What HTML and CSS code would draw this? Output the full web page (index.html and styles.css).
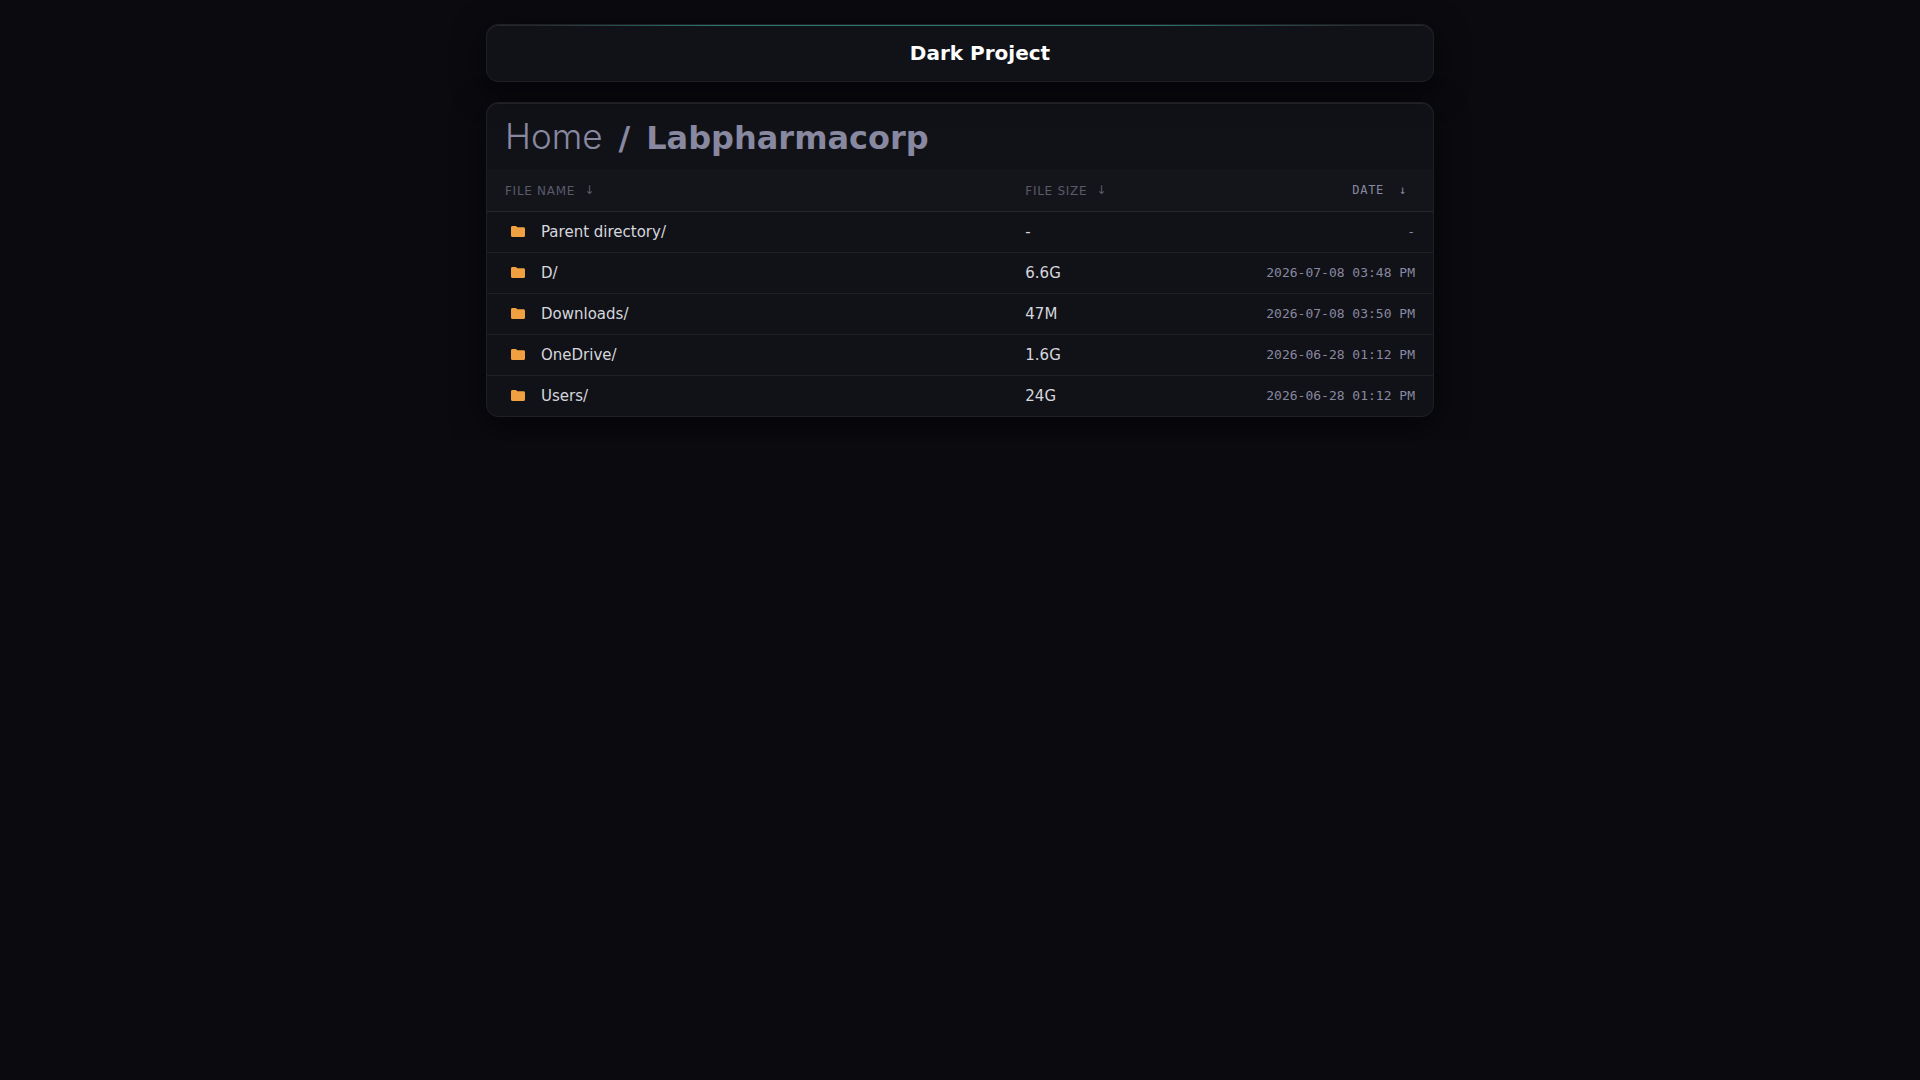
FILE: index.html
```
<!DOCTYPE html>
<html lang="en">
<head>
<meta charset="utf-8">
<meta name="viewport" content="width=device-width, initial-scale=1">
<title>Dark Project</title>
<link rel="stylesheet" href="styles.css">
</head>
<body>
<svg class="sprite" aria-hidden="true">
  <symbol id="folder" viewBox="0 0 14 11">
    <path d="M1.500 0H4.600C5.200 0 5.500.2 5.800.7L6.300 1.300H12.500C13.400 1.300 14 1.900 14 2.800V9.500C14 10.400 13.400 11 12.500 11H1.500C.6 11 0 10.400 0 9.500V1.500C0 .6.6 0 1.500 0z"/>
  </symbol>
</svg>
<div class="page">
  <header class="card banner">
    <h1 class="banner-title">Dark Project</h1>
  </header>
  <main class="card listing">
    <nav class="path" aria-label="Breadcrumb">
      <a class="path-home" href="#">Home</a>
      <span>/</span>
      <span>Labpharmacorp</span>
    </nav>
    <table class="files">
      <thead>
        <tr>
          <th class="name" scope="col"><a href="#">File Name</a><a class="sort" href="#" aria-label="Sort by name">↓</a></th>
          <th class="size" scope="col"><a href="#">File Size</a><a class="sort" href="#" aria-label="Sort by size">↓</a></th>
          <th class="date" scope="col"><a href="#">Date</a><a class="sort" href="#" aria-label="Sort by date">↓</a></th>
        </tr>
      </thead>
      <tbody>
        <tr><td class="name"><a href="#"><svg class="icon" aria-hidden="true"><use href="#folder"/></svg>Parent directory/</a></td><td class="size">-</td><td class="date">-</td></tr>
        <tr><td class="name"><a href="#"><svg class="icon" aria-hidden="true"><use href="#folder"/></svg>D/</a></td><td class="size">6.6G</td><td class="date">2026-07-08 03:48 PM</td></tr>
        <tr><td class="name"><a href="#"><svg class="icon" aria-hidden="true"><use href="#folder"/></svg>Downloads/</a></td><td class="size">47M</td><td class="date">2026-07-08 03:50 PM</td></tr>
        <tr><td class="name"><a href="#"><svg class="icon" aria-hidden="true"><use href="#folder"/></svg>OneDrive/</a></td><td class="size">1.6G</td><td class="date">2026-06-28 01:12 PM</td></tr>
        <tr><td class="name"><a href="#"><svg class="icon" aria-hidden="true"><use href="#folder"/></svg>Users/</a></td><td class="size">24G</td><td class="date">2026-06-28 01:12 PM</td></tr>
      </tbody>
    </table>
  </main>
</div>
</body>
</html>
```
FILE: styles.css
```
* { box-sizing: border-box; }

body {
  margin: 0;
  background: #0a0a0f;
  color: #d6d6de;
  font-family: "DejaVu Sans", sans-serif;
  font-size: 15px;
}

a { color: inherit; text-decoration: none; }

.sprite { display: none; }

.page {
  display: flex;
  flex-direction: column;
  gap: 20px;
  max-width: 988px;
  margin: 0 auto;
  padding: 24px 20px;
}

.card {
  border: 1px solid #1f2024;
  border-radius: 12px;
  background: #111217;
  box-shadow: 0 8px 32px rgba(0, 0, 0, .5), inset 0 1px 0 #25262a;
  overflow: hidden;
}

.banner {
  position: relative;
  padding: 14px 20px 14px 60px;
  text-align: center;
}

.banner::before {
  content: "";
  position: absolute;
  inset: 0 0 auto;
  height: 1px;
  background: linear-gradient(90deg, transparent 4%, #287670 24%, #287670 70%, transparent 94%);
}

.banner-title {
  margin: 0;
  color: #fff;
  font-size: 20px;
  font-weight: 700;
  line-height: 28px;
}

.path {
  display: flex;
  align-items: baseline;
  gap: 16px;
  height: 66px;
  padding: 12px 18px;
  color: #8888a0;
  font-size: 32px;
  font-weight: 700;
  line-height: 42px;
}

.path-home {
  font-family: Inter, sans-serif;
  font-size: 35px;
  font-weight: 300;
}

.files {
  width: 100%;
  border-collapse: collapse;
  table-layout: fixed;
}

.files th,
.files td {
  height: 41px;
  padding: 0 18px;
  border-bottom: 1px solid #1f2024;
  text-align: left;
}

.files tbody tr:last-child td { border-bottom: 0; }

.files thead { background: #14151a; }

.files th {
  height: 42px;
  border-bottom-color: #26272c;
  color: #5a5a6a;
  font-size: 12px;
  font-weight: 400;
  letter-spacing: 0.06em;
  text-transform: uppercase;
}

.files .name { width: 55%; }
.files .size { width: 20%; }

.files .date {
  color: #8888a0;
  font-family: "DejaVu Sans Mono", monospace;
  font-size: 13px;
  text-align: right;
}

.files th.date { padding-right: 26px; font-size: 12px; }

.sort { margin-left: 9px; }
.date .sort { margin-left: 15px; }

.name a,
th.size a { vertical-align: middle; }

td.name a { display: flex; align-items: center; }

.icon {
  width: 14px;
  height: 11px;
  margin: 0 16px 0 6px;
  fill: #f0a040;
}
```
